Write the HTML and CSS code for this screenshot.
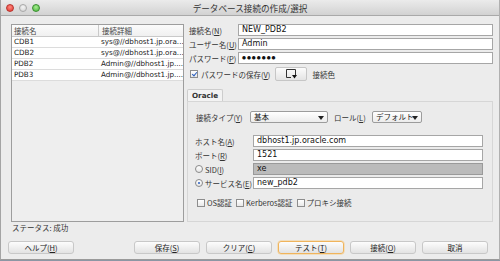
FILE: index.html
```html
<!DOCTYPE html>
<html lang="ja">
<head>
    <meta charset="UTF-8">
    <title>データベース接続の作成/選択</title>
    <link rel="stylesheet" href="styles.css">
</head>
<body>
    <div class="window">
        <div class="titlebar">
            <div class="lights">
                <span class="light red"></span>
                <span class="light gray"></span>
                <span class="light green"></span>
            </div>
            <div class="title">データベース接続の作成/選択</div>
        </div>

        <div class="main">
            <div class="left">
                <div class="list">
                    <div class="list-head">
                        <span class="c1">接続名</span>
                        <span class="c2">接続詳細</span>
                    </div>
                    <div class="row"><span class="c1">CDB1</span><span class="c2">sys@//dbhost1.jp.ora...</span></div>
                    <div class="row"><span class="c1">CDB2</span><span class="c2">sys@//dbhost1.jp.ora...</span></div>
                    <div class="row"><span class="c1">PDB2</span><span class="c2">Admin@//dbhost1.jp....</span></div>
                    <div class="row"><span class="c1">PDB3</span><span class="c2">Admin@//dbhost1.jp....</span></div>
                </div>
                <div class="status">ステータス: 成功</div>
            </div>

            <div class="right">
                <div class="field">
                    <span class="label">接続名(<u>N</u>)</span>
                    <div class="input">NEW_PDB2</div>
                </div>
                <div class="field">
                    <span class="label">ユーザー名(<u>U</u>)</span>
                    <div class="input">Admin</div>
                </div>
                <div class="field">
                    <span class="label">パスワード(<u>P</u>)</span>
                    <div class="input dots">●●●●●●●</div>
                </div>

                <div class="save-row">
                    <span class="check checked"></span>
                    <span class="check-text">パスワードの保存(<u>V</u>)</span>
                    <span class="color-btn">
                        <svg width="11" height="10" viewBox="0 0 11 10">
                            <path d="M5 8.5 H0.5 V0.5 H9.5 V6" fill="none" stroke="#333" stroke-width="1"/>
                            <path d="M6 6 H11 L8.5 9.5 Z" fill="#111"/>
                        </svg>
                    </span>
                    <span class="color-text">接続色</span>
                </div>

                <div class="tabs">
                    <span class="tab">Oracle</span>
                </div>
                <div class="panel">
                    <div class="type-row">
                        <span class="type-label">接続タイプ(<u>Y</u>)</span>
                        <div class="select wide">基本</div>
                        <span class="role-label">ロール(<u>L</u>)</span>
                        <div class="select narrow">デフォルト</div>
                    </div>

                    <div class="prow first">
                        <span class="plabel">ホスト名(<u>A</u>)</span>
                        <div class="input">dbhost1.jp.oracle.com</div>
                    </div>
                    <div class="prow">
                        <span class="plabel">ポート(<u>R</u>)</span>
                        <div class="input">1521</div>
                    </div>
                    <div class="prow">
                        <span class="plabel"><span class="radio"></span>SID(<u>I</u>)</span>
                        <div class="input disabled">xe</div>
                    </div>
                    <div class="prow">
                        <span class="plabel"><span class="radio on"></span>サービス名(<u>E</u>)</span>
                        <div class="input">new_pdb2</div>
                    </div>

                    <div class="auth-row">
                        <span class="check"></span><span class="auth-text">OS認証</span>
                        <span class="check"></span><span class="auth-text">Kerberos認証</span>
                        <span class="check"></span><span class="auth-text">プロキシ接続</span>
                    </div>
                </div>
            </div>
        </div>

        <div class="footer">
            <button class="btn">ヘルプ(<u>H</u>)</button>
            <div class="btn-group">
                <button class="btn">保存(<u>S</u>)</button>
                <button class="btn">クリア(<u>C</u>)</button>
                <button class="btn focus">テスト(<u>T</u>)</button>
                <button class="btn">接続(<u>O</u>)</button>
                <button class="btn">取消</button>
            </div>
        </div>
    </div>
</body>
</html>
```

FILE: styles.css
```css
body {
    margin: 0;
    width: 500px;
    height: 261px;
    overflow: hidden;
    background: #8c96a4;
    font-family: "Noto Sans CJK JP", "DejaVu Sans", sans-serif;
    font-size: 7.5px;
    color: #222;
}
u {
    text-decoration: underline;
}
.window {
    width: 498px;
    height: 259px;
    background: #ececec;
    border-left: 1px solid #a4a4a4;
    border-bottom: 1px solid #9a9a9a;
    border-right: 1px solid #b0b0b0;
    display: flex;
    flex-direction: column;
}
.titlebar {
    height: 15px;
    flex: none;
    border-bottom: 1px solid #a9a9a9;
    background: linear-gradient(#ebebeb, #d2d2d2);
    display: flex;
    align-items: center;
    position: relative;
}
.lights {
    display: flex;
    gap: 5px;
    padding-left: 5px;
}
.light {
    width: 8px;
    height: 8px;
    border-radius: 50%;
    box-sizing: border-box;
}
.light.red {
    background: radial-gradient(circle at 50% 35%, #ff8a80, #e0342c);
    border: 1px solid #b8322c;
}
.light.gray {
    background: radial-gradient(circle at 50% 35%, #f4f4f4, #cfcfcf);
    border: 1px solid #a8a8a8;
}
.light.green {
    background: radial-gradient(circle at 50% 35%, #a8ee92, #48b43a);
    border: 1px solid #3a8f30;
}
.title {
    position: absolute;
    left: 0;
    right: 0;
    top: 2px;
    text-align: center;
    font-size: 8.6px;
    color: #333;
}
.main {
    display: flex;
    gap: 3px;
    padding: 8px 6px 0 10px;
    height: 210px;
    flex: none;
}
.left {
    width: 173px;
    flex: none;
    display: flex;
    flex-direction: column;
}
.list {
    height: 196px;
    border: 1px solid #9d9d9d;
    background: #eeeeee;
}
.list-head, .row {
    display: flex;
    height: 10px;
    line-height: 10px;
    border-bottom: 1px solid #dcdcdc;
    background: #fff;
    font-family: "DejaVu Sans", "Noto Sans CJK JP", sans-serif;
    font-size: 7.2px;
    white-space: nowrap;
}
.list-head {
    height: 11px;
    line-height: 12px;
    font-family: "Noto Sans CJK JP", sans-serif;
    font-size: 7.5px;
    color: #444;
    background: linear-gradient(#fbfbfb, #f0f0f0);
    border-bottom: 1px solid #c9c9c9;
}
.list-head .c1 {
    border-right: 1px solid #c9c9c9;
}
.c1 {
    width: 84px;
    padding-left: 2px;
    flex: none;
}
.c2 {
    flex: 1;
    padding-left: 3px;
    overflow: hidden;
}
.status {
    margin-top: 1px;
    padding-left: 1px;
    line-height: 10px;
    color: #333;
}
.right {
    width: 306px;
    flex: none;
}
.field {
    display: flex;
    align-items: center;
    margin-bottom: 2px;
}
.label {
    width: 49px;
    flex: none;
    padding-left: 2px;
    color: #333;
    white-space: nowrap;
}
.input {
    flex: 1;
    height: 10px;
    line-height: 10px;
    border: 1px solid #a6a6a6;
    background: #fff;
    padding-left: 3px;
    color: #111;
    font-family: "DejaVu Sans", sans-serif;
    font-size: 8px;
    overflow: hidden;
    white-space: nowrap;
}
.input.dots {
    font-size: 4.5px;
    letter-spacing: 1px;
}
.input.disabled {
    background: #bbbbbb;
    border-color: #9a9a9a;
}
.save-row {
    display: flex;
    align-items: center;
    margin-top: 3px;
    height: 14px;
    padding-left: 3px;
    white-space: nowrap;
}
.check {
    width: 8px;
    height: 8px;
    box-sizing: border-box;
    border: 1px solid #8d8d8d;
    background: linear-gradient(#ffffff, #e8e8e8);
    flex: none;
    position: relative;
}
.check.checked::after {
    content: "";
    position: absolute;
    left: 2px;
    top: 0;
    width: 2px;
    height: 4px;
    border: solid #2a5fc0;
    border-width: 0 1.5px 1.5px 0;
    transform: rotate(40deg);
}
.check-text {
    margin-left: 3px;
    color: #333;
}
.color-btn {
    margin-left: 5px;
    width: 30px;
    height: 12px;
    flex: none;
    border: 1px solid #c6c6c6;
    border-radius: 2px;
    background: linear-gradient(#fcfcfc, #e4e4e4);
    display: flex;
    align-items: center;
    justify-content: center;
}
.color-text {
    margin-left: 5px;
    color: #333;
}
.tabs {
    margin-top: 8px;
    display: flex;
}
.tab {
    height: 11px;
    line-height: 12px;
    padding: 0 4px;
    border: 1px solid #cdcdcd;
    border-bottom: none;
    border-radius: 2px 2px 0 0;
    background: #f3f3f3;
    font-family: "DejaVu Sans", sans-serif;
    font-weight: bold;
    color: #333;
    font-size: 7.2px;
}
.panel {
    height: 119px;
    border: 1px solid #d6d6d6;
    background: #ebebeb;
}
.type-row {
    display: flex;
    align-items: center;
    padding: 9px 0 0 8px;
    white-space: nowrap;
}
.type-label {
    width: 54px;
    flex: none;
    color: #333;
}
.select {
    height: 10px;
    line-height: 10px;
    flex: none;
    border: 1px solid #9c9c9c;
    border-radius: 2px;
    background: linear-gradient(#ffffff, #ececec);
    padding-left: 3px;
    position: relative;
    color: #222;
}
.select::after {
    content: "";
    position: absolute;
    right: 3px;
    top: 4px;
    border-left: 3px solid transparent;
    border-right: 3px solid transparent;
    border-top: 4px solid #222;
}
.select.wide {
    width: 73px;
}
.select.narrow {
    width: 45px;
}
.role-label {
    margin: 0 4px 0 6px;
    width: 34px;
    flex: none;
    color: #333;
}
.prow {
    display: flex;
    align-items: center;
    margin: 0 9px 2px 7px;
}
.prow.first {
    margin-top: 12px;
}
.plabel {
    width: 58px;
    flex: none;
    display: flex;
    align-items: center;
    color: #333;
    white-space: nowrap;
}
.radio {
    width: 8px;
    height: 8px;
    flex: none;
    box-sizing: border-box;
    border: 1px solid #8a8a8a;
    border-radius: 50%;
    background: linear-gradient(#ffffff, #e6e6e6);
    margin-right: 2px;
    position: relative;
}
.radio.on::after {
    content: "";
    position: absolute;
    left: 2px;
    top: 2px;
    width: 2px;
    height: 2px;
    border-radius: 50%;
    background: #2a5fc0;
}
.auth-row {
    display: flex;
    align-items: center;
    height: 11px;
    margin: 8px 0 0 9px;
    white-space: nowrap;
}
.auth-text {
    margin: 0 4px 0 2px;
    color: #333;
}
.footer {
    display: flex;
    justify-content: space-between;
    padding: 7px 11px 0 7px;
}
.btn-group {
    display: flex;
    gap: 6px;
}
.btn {
    width: 66px;
    height: 13px;
    padding: 0;
    border: 1px solid #c8c8c8;
    border-radius: 3px;
    background: linear-gradient(#fdfdfd, #e2e2e2);
    font-family: "Noto Sans CJK JP", "DejaVu Sans", sans-serif;
    font-size: 7.5px;
    line-height: 11px;
    color: #222;
}
.btn.focus {
    border-color: #f0b45c;
    box-shadow: 0 0 0 0.5px #f6cf8f;
}
```
